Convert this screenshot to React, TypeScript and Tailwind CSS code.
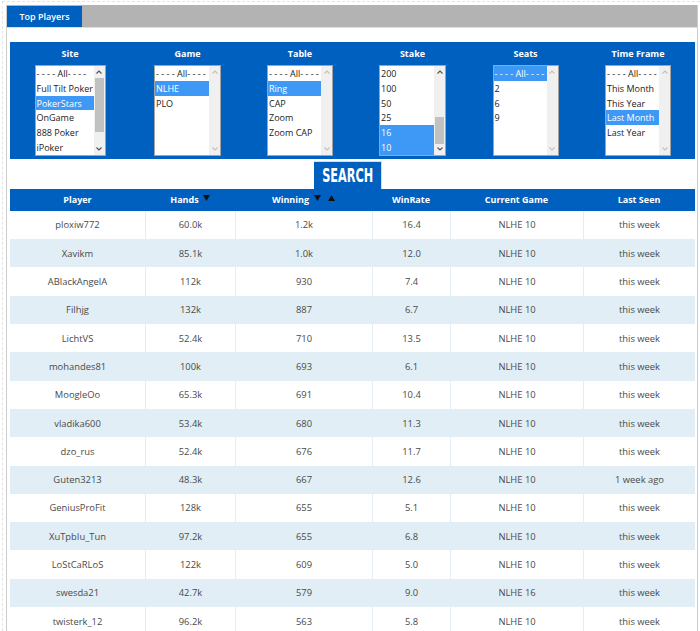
import React from "react";

interface ListBox {
  label: string;
  width: number;
  options: string[];
  selected: number[];
  // scrollbar thumb, in px from the box top; undefined when nothing to scroll
  thumb?: { top: number; height: number };
}

const filters: ListBox[] = [
  {
    label: "Site",
    width: 71,
    options: ["- - - - All- - - -", "Full Tilt Poker", "PokerStars", "OnGame", "888 Poker", "iPoker"],
    selected: [2],
    thumb: { top: 12, height: 54 },
  },
  { label: "Game", width: 67, options: ["- - - - All- - - -", "NLHE", "PLO"], selected: [1] },
  { label: "Table", width: 66, options: ["- - - - All- - - -", "Ring", "CAP", "Zoom", "Zoom CAP"], selected: [1] },
  {
    label: "Stake",
    width: 67,
    options: ["200", "100", "50", "25", "16", "10"],
    selected: [4, 5],
    thumb: { top: 51, height: 27 },
  },
  { label: "Seats", width: 66, options: ["- - - - All- - - -", "2", "6", "9"], selected: [0] },
  {
    label: "Time Frame",
    width: 66,
    options: ["- - - - All- - - -", "This Month", "This Year", "Last Month", "Last Year"],
    selected: [3],
  },
];

const players = [
  ["ploxiw772", "60.0k", "1.2k", "16.4", "NLHE 10", "this week"],
  ["Xavikm", "85.1k", "1.0k", "12.0", "NLHE 10", "this week"],
  ["ABlackAngelA", "112k", "930", "7.4", "NLHE 10", "this week"],
  ["Filhjg", "132k", "887", "6.7", "NLHE 10", "this week"],
  ["LichtVS", "52.4k", "710", "13.5", "NLHE 10", "this week"],
  ["mohandes81", "100k", "693", "6.1", "NLHE 10", "this week"],
  ["MoogleOo", "65.3k", "691", "10.4", "NLHE 10", "this week"],
  ["vladika600", "53.4k", "680", "11.3", "NLHE 10", "this week"],
  ["dzo_rus", "52.4k", "676", "11.7", "NLHE 10", "this week"],
  ["Guten3213", "48.3k", "667", "12.6", "NLHE 10", "1 week ago"],
  ["GeniusProFit", "128k", "655", "5.1", "NLHE 10", "this week"],
  ["XuTpbIu_Tun", "97.2k", "655", "6.8", "NLHE 10", "this week"],
  ["LoStCaRLoS", "122k", "609", "5.0", "NLHE 10", "this week"],
  ["swesda21", "42.7k", "579", "9.0", "NLHE 16", "this week"],
  ["twisterk_12", "96.2k", "563", "5.8", "NLHE 10", "this week"],
];

function Chevron({ up, active }: { up: boolean; active: boolean }) {
  return (
    <svg width="6" height="4" viewBox="0 0 6 4" className="block">
      <polyline
        points={up ? "0.5,3.5 3,1 5.5,3.5" : "0.5,0.5 3,3 5.5,0.5"}
        fill="none"
        stroke={active ? "#505050" : "#c2c2c2"}
        strokeWidth="1.1"
      />
    </svg>
  );
}

function SelectBox({ box }: { box: ListBox }) {
  const active = !!box.thumb;
  return (
    <div
      className="relative flex h-[90.5px] border border-[#a3a3a3] bg-white"
      style={{ width: box.width }}
    >
      <div className="flex-1 overflow-hidden">
        {box.options.map((opt, i) => {
          const sel = box.selected.includes(i);
          return (
            <div
              key={opt}
              className={`h-[14.8px] whitespace-nowrap pl-[1px] text-[9px] leading-[15.5px] ${
                sel ? "bg-[#3d99f5] text-white" : "text-[#222]"
              }`}
            >
              {opt}
            </div>
          );
        })}
      </div>
      <div className="relative w-[11px] bg-[#f0f0f0]">
        <div className="flex h-[11px] items-center justify-center">
          <Chevron up active={active} />
        </div>
        {box.thumb && (
          <div
            className="absolute left-[1px] right-[1px] bg-[#c1c1c1]"
            style={{ top: box.thumb.top, height: box.thumb.height }}
          />
        )}
        <div className="absolute bottom-0 flex h-[11px] w-full items-center justify-center">
          <Chevron up={false} active={active} />
        </div>
      </div>
    </div>
  );
}

function SortArrow({ up }: { up?: boolean }) {
  return (
    <svg width="7" height="6" viewBox="0 0 7 6" className="mb-[5px] block">
      <polygon points={up ? "0,6 3.5,0 7,6" : "0,0 7,0 3.5,6"} fill="#111" />
    </svg>
  );
}

export default function App() {
  return (
    <div className="h-[631px] overflow-hidden bg-white font-['Open_Sans',sans-serif]">
      <div className="ml-[2px] mt-[1px] h-[640px] border-l border-t border-dashed border-[#e4e4e4] pl-[3px] pt-[3px]">
        <div className="w-[692px] border-x border-[#cdcdcd]">
          {/* Tab bar */}
          <div className="flex h-[23px] items-end border-b border-[#dedede] bg-[#b3b3b3]">
            <div className="flex h-[21px] w-[75px] items-center justify-center bg-[#0060bf] text-[9px] font-semibold text-white">
              Top Players
            </div>
          </div>

          {/* Filters */}
          <div className="ml-[3px] mt-[14px] w-[685px] bg-[#0060bf] pb-[3px] pt-[5px]">
            <div className="grid grid-cols-[120px_115px_110px_115px_111px_114px]">
              {filters.map((f) => (
                <div key={f.label} className="flex flex-col items-center">
                  <div className="mb-[4px] h-[14px] text-[9px] font-bold leading-[14px] text-white">{f.label}</div>
                  <SelectBox box={f} />
                </div>
              ))}
            </div>
          </div>

          <div className="ml-[3px] w-[685px]">
            <div className="mt-[2px] flex pl-[304px]">
              <button className="flex h-[28px] w-[68px] items-center justify-center border-r border-t border-[#cfdff2] bg-[#0060bf]">
                <span className="inline-block scale-x-[0.66] font-['DejaVu_Sans_Condensed',sans-serif] text-[19px] font-bold leading-none text-white">
                  SEARCH
                </span>
              </button>
            </div>

            {/* Results table */}
            <div className="grid h-[22.4px] grid-cols-[135px_90px_137px_78px_133px_112px] bg-[#0060bf] pt-[1px] text-[9px] font-bold text-white">
              <div className="flex items-center justify-center">Player</div>
              <div className="flex items-center justify-center gap-[4px]">
                <span>Hands</span>
                <SortArrow />
              </div>
              <div className="flex items-center justify-center gap-[5px]">
                <span>Winning</span>
                <div className="flex gap-[7px]">
                  <SortArrow />
                  <SortArrow up />
                </div>
              </div>
              <div className="flex items-center justify-center">WinRate</div>
              <div className="flex items-center justify-center">Current Game</div>
              <div className="flex items-center justify-center">Last Seen</div>
            </div>

            {players.map((row, i) => (
              <div
                key={row[0]}
                className={`grid h-[28.3px] grid-cols-[135px_90px_137px_78px_133px_112px] text-[9.4px] text-[#4a4a4a] ${
                  i % 2 === 1 ? "bg-[#e1eef5]" : "bg-white"
                }`}
              >
                {row.map((cell, j) => (
                  <div
                    key={j}
                    className={`flex items-center justify-center pt-[1px] ${j > 0 ? "border-l border-[#e1eef5]" : ""}`}
                  >
                    {cell}
                  </div>
                ))}
              </div>
            ))}
          </div>
        </div>
      </div>
    </div>
  );
}
